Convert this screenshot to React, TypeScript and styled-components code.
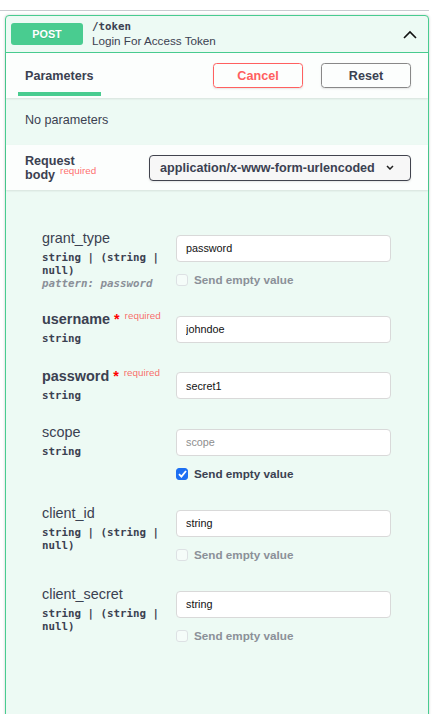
import React from 'react';
import styled, { createGlobalStyle } from 'styled-components';

const GlobalStyle = createGlobalStyle`
  body {
    margin: 0;
    background: #fff;
    font-family: "Liberation Sans", Arial, sans-serif;
    color: #3b4151;
  }
  * { box-sizing: border-box; }
`;

const mono = `"DejaVu Sans Mono", "Liberation Mono", monospace`;

// Page frame
const Page = styled.div`
  width: 429px;
  padding-top: 10px;
`;

const TagRule = styled.div`
  height: 1px;
  background: #c9cbd0;
  margin-bottom: 4px;
`;

const Card = styled.div`
  margin-left: 5px;
  border: 1px solid #49cc90;
  border-radius: 4px;
  background: #edfaf4;
  box-shadow: 0 0 3px rgba(0, 0, 0, 0.19);
  padding-bottom: 90px;
`;

// Summary bar
const Summary = styled.div`
  display: flex;
  align-items: center;
  height: 37px;
  padding: 0 11px 0 5px;
  border-bottom: 1px solid #49cc90;
`;

const Method = styled.span`
  width: 72px;
  height: 22px;
  display: flex;
  align-items: center;
  justify-content: center;
  background: #49cc90;
  color: #fff;
  border-radius: 3px;
  font-weight: 700;
  font-size: 10.8px;
  text-shadow: 0 1px 0 rgba(0, 0, 0, 0.1);
`;

const PathBlock = styled.div`
  flex: 1;
  margin-left: 9px;
  display: flex;
  flex-direction: column;
`;

const Path = styled.span`
  font-family: ${mono};
  font-weight: 700;
  font-size: 10.8px;
  line-height: 14px;
`;

const Description = styled.span`
  font-size: 11.7px;
  line-height: 14px;
`;

// Section headers
const SectionHeader = styled.div<{ $between?: boolean }>`
  position: relative;
  display: flex;
  align-items: center;
  justify-content: ${p => (p.$between ? 'space-between' : 'flex-start')};
  height: 45px;
  background: rgba(255, 255, 255, 0.8);
  box-shadow: 0 1px 2px rgba(0, 0, 0, 0.1);
  padding: ${p => (p.$between ? '0 17px 0 19px' : '0 17px 0 12px')};
`;

const Tab = styled.div`
  align-self: stretch;
  display: flex;
  align-items: center;
  padding: 6px 7px 0;
  margin-bottom: 2px;
  border-bottom: 4px solid #49cc90;
  font-weight: 700;
  font-size: 12.6px;
`;

const ButtonGroup = styled.div`
  margin-left: auto;
  display: flex;
  gap: 18px;
`;

const Button = styled.button<{ $danger?: boolean }>`
  width: 90px;
  height: 25px;
  background: transparent;
  border: 1px solid ${p => (p.$danger ? '#ff6060' : '#888')};
  color: ${p => (p.$danger ? '#ff6060' : '#3b4151')};
  border-radius: 3.6px;
  box-shadow: 0 1px 2px rgba(0, 0, 0, 0.1);
  font-family: inherit;
  font-weight: 700;
  font-size: 12.6px;
  padding: 0;
`;

const Note = styled.div`
  padding: 15px 19px 17px;
  font-size: 12.6px;
  line-height: 15px;
`;

const BodyLabel = styled.div`
  font-weight: 700;
  font-size: 12.6px;
  line-height: 14px;
`;

const RequiredMark = styled.span`
  position: relative;
  top: -5px;
  padding-left: 5px;
  line-height: 0;
  font-weight: 400;
  font-size: 9.9px;
  color: rgba(255, 0, 0, 0.6);
`;

const Select = styled.div`
  width: 262px;
  height: 26px;
  display: flex;
  align-items: center;
  justify-content: space-between;
  padding: 0 16px 0 10px;
  border: 1px solid #41444e;
  border-radius: 4px;
  background: #f7f7f7;
  box-shadow: 0 1px 2px rgba(0, 0, 0, 0.1);
  font-weight: 700;
  font-size: 12.6px;
`;

// Parameter form
const Params = styled.div`
  padding: 31px 36px 0;
`;

const ParamRow = styled.div`
  display: grid;
  grid-template-columns: 134px 215px;
  align-items: start;
`;

const NameCell = styled.div`
  padding: 9px 10px 9px 0;
`;

const ValueCell = styled.div`
  padding-top: 9px;
`;

const ParamName = styled.div<{ $required?: boolean }>`
  font-size: 14.4px;
  line-height: 16.5px;
  font-weight: ${p => (p.$required ? 700 : 400)};
  white-space: nowrap;
`;

const Star = styled.span`
  color: red;
  line-height: 0;
`;

const ParamType = styled.div<{ $tight?: boolean }>`
  padding: ${p => (p.$tight ? '4.5px 0 0' : '4.5px 0')};
  font-family: ${mono};
  font-weight: 700;
  font-size: 10.8px;
  line-height: 13px;
`;

const Pattern = styled.div`
  font-family: ${mono};
  font-style: italic;
  font-weight: 700;
  font-size: 10.8px;
  line-height: 13px;
  color: #8a8f98;
`;

const TextInput = styled.input`
  display: block;
  width: 100%;
  height: 27px;
  margin: 4.5px 0;
  padding: 0 9px;
  border: 1px solid #d9d9d9;
  border-radius: 4px;
  background: #fff;
  font-family: "Liberation Sans", Arial, sans-serif;
  font-size: 10.8px;
  color: #111;
  outline: none;

  &::placeholder {
    color: #8e8e8e;
  }
`;

const CheckRow = styled.label<{ $on?: boolean }>`
  display: flex;
  align-items: center;
  gap: 6px;
  height: 36px;
  padding: 6px 0 15px;
  font-weight: 700;
  font-size: 11.7px;
  color: ${p => (p.$on ? '#3b4151' : '#8b9098')};
`;

const Box = styled.span<{ $on?: boolean }>`
  width: 12px;
  height: 12px;
  display: flex;
  align-items: center;
  justify-content: center;
  border-radius: 3px;
  border: 1px solid ${p => (p.$on ? '#1d6ff2' : '#dde1e4')};
  background: ${p => (p.$on ? '#1d6ff2' : 'rgba(255,255,255,0.45)')};
`;

interface Param {
  name: string;
  required?: boolean;
  types: string;
  pattern?: string;
  value?: string;
  placeholder?: string;
  empty?: 'off' | 'on';
}

const params: Param[] = [
  { name: 'grant_type', types: 'string | (string | null)', pattern: 'password', value: 'password', empty: 'off' },
  { name: 'username', required: true, types: 'string', value: 'johndoe' },
  { name: 'password', required: true, types: 'string', value: 'secret1' },
  { name: 'scope', types: 'string', placeholder: 'scope', empty: 'on' },
  { name: 'client_id', types: 'string | (string | null)', value: 'string', empty: 'off' },
  { name: 'client_secret', types: 'string | (string | null)', value: 'string', empty: 'off' },
];

const ChevronUp = () => (
  <svg width="14" height="9" viewBox="0 0 14 9">
    <polyline points="1,8 7,2 13,8" fill="none" stroke="#111" strokeWidth="1.6" />
  </svg>
);

const ChevronDown = () => (
  <svg width="8" height="5" viewBox="0 0 8 5">
    <polyline points="1,1 4,4 7,1" fill="none" stroke="#222" strokeWidth="1.5" />
  </svg>
);

const Check = () => (
  <svg width="9" height="8" viewBox="0 0 9 8">
    <polyline points="1,4.2 3.4,6.6 8,1" fill="none" stroke="#fff" strokeWidth="1.8" />
  </svg>
);

const ParamField: React.FC<{ p: Param }> = ({ p }) => (
  <ParamRow>
    <NameCell>
      <ParamName $required={p.required}>
        {p.name}
        {p.required && (
          <>
            <Star>&nbsp;*</Star>
            <RequiredMark>required</RequiredMark>
          </>
        )}
      </ParamName>
      <ParamType $tight={!!p.pattern}>{p.types}</ParamType>
      {p.pattern && <Pattern>pattern: {p.pattern}</Pattern>}
    </NameCell>
    <ValueCell>
      <TextInput defaultValue={p.value} placeholder={p.placeholder} />
      {p.empty && (
        <CheckRow $on={p.empty === 'on'}>
          <Box $on={p.empty === 'on'}>{p.empty === 'on' && <Check />}</Box>
          Send empty value
        </CheckRow>
      )}
    </ValueCell>
  </ParamRow>
);

export default function App() {
  return (
    <Page>
      <GlobalStyle />
      <TagRule />
      <Card>
        <Summary>
          <Method>POST</Method>
          <PathBlock>
            <Path>/token</Path>
            <Description>Login For Access Token</Description>
          </PathBlock>
          <ChevronUp />
        </Summary>

        <SectionHeader>
          <Tab>Parameters</Tab>
          <ButtonGroup>
            <Button $danger>Cancel</Button>
            <Button>Reset</Button>
          </ButtonGroup>
        </SectionHeader>

        <Note>No parameters</Note>

        <SectionHeader $between>
          <BodyLabel>
            Request
            <br />
            body<RequiredMark>required</RequiredMark>
          </BodyLabel>
          <Select>
            application/x-www-form-urlencoded
            <ChevronDown />
          </Select>
        </SectionHeader>

        <Params>
          {params.map(p => (
            <ParamField key={p.name} p={p} />
          ))}
        </Params>
      </Card>
    </Page>
  );
}
